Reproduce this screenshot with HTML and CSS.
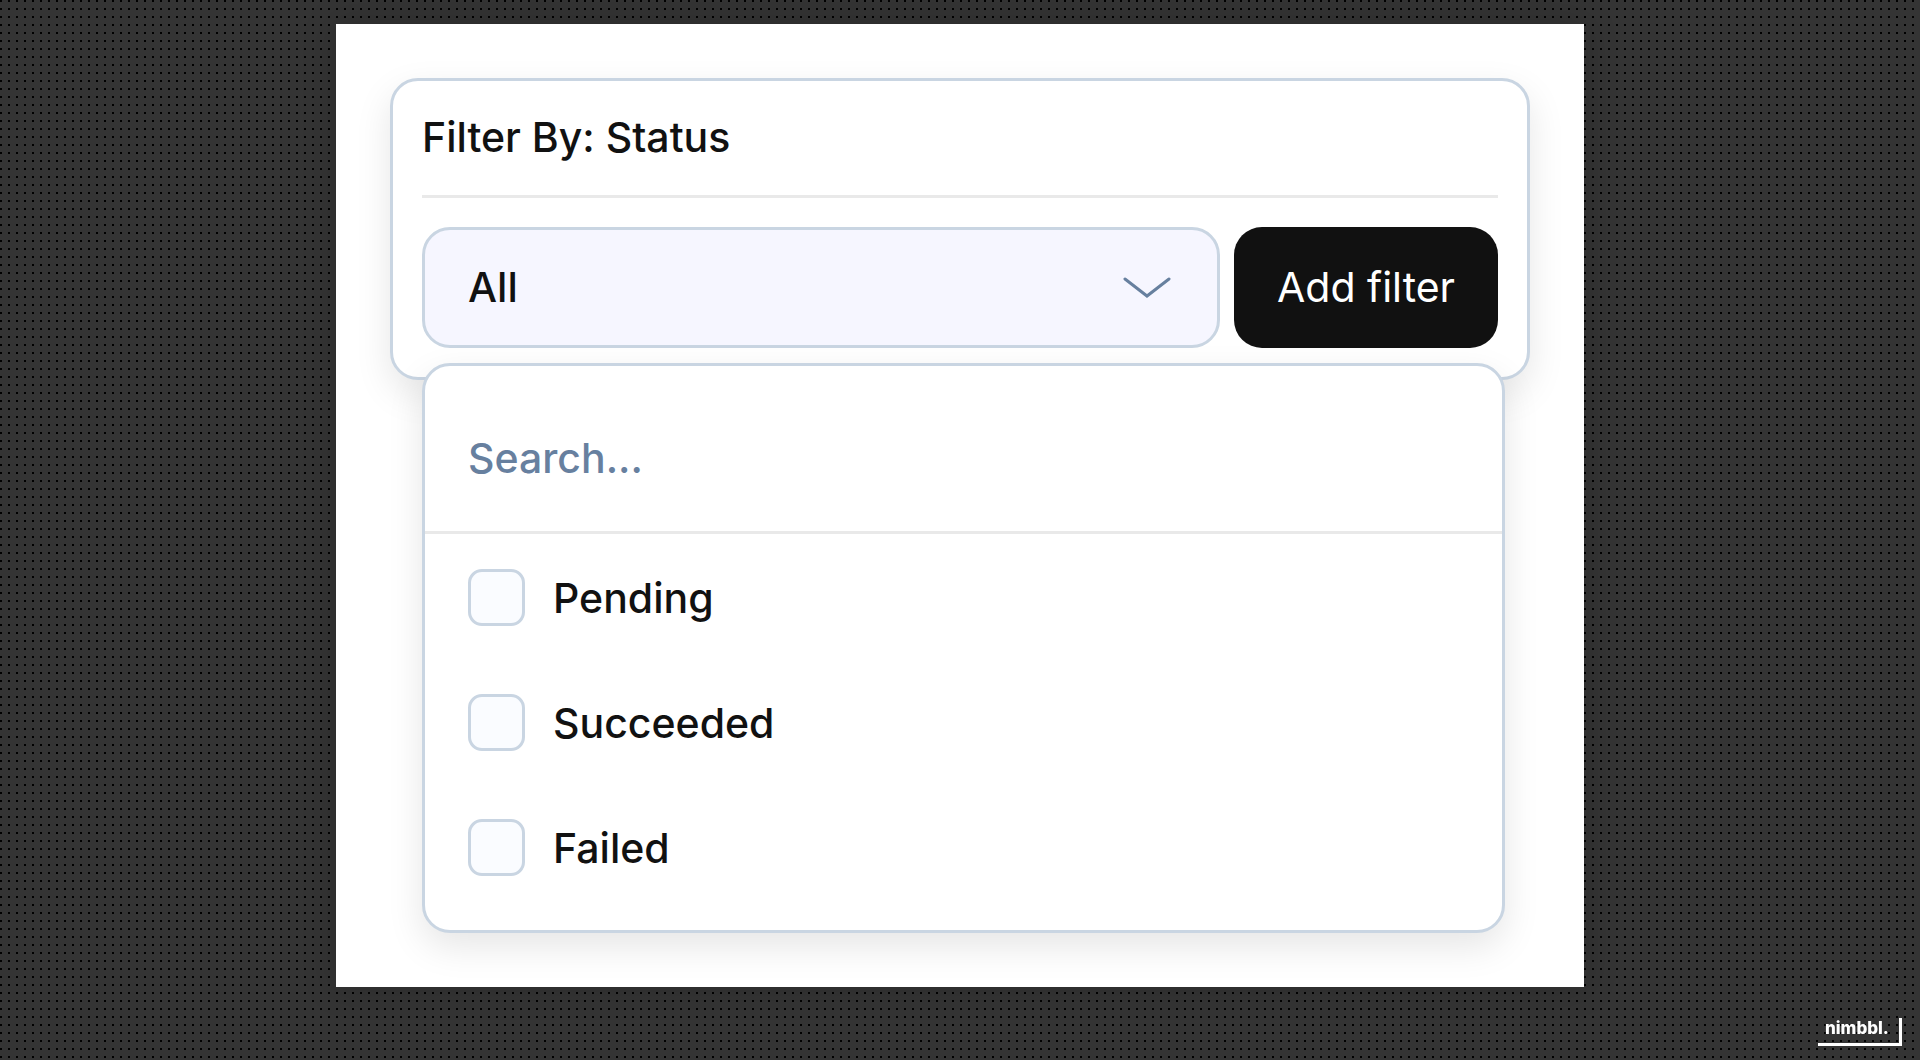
FILE: index.html
```html
<!DOCTYPE html>
<html lang="en">
<head>
  <meta charset="UTF-8">
  <meta name="viewport" content="width=device-width, initial-scale=1.0">
  <title>Filter by status</title>
  <link rel="stylesheet" href="styles.css">
</head>
<body>
  <main class="stage">
    <!-- Filter card -->
    <section class="filter-card">
      <h1>Filter By: Status</h1>
      <div class="filter-row">
        <div class="select-wrap">
          <select id="status" aria-label="Status">
            <option>All</option>
          </select>
          <svg class="chevron" viewBox="0 0 50 24" aria-hidden="true">
            <path d="M2 3 L24 20 L46 3" />
          </svg>
        </div>
        <button class="add-button" type="button">Add filter</button>
      </div>
    </section>

    <!-- Dropdown -->
    <section class="dropdown">
      <input class="search" type="text" placeholder="Search..." aria-label="Search">
      <div class="options">
        <label><input type="checkbox" name="status"> Pending</label>
        <label><input type="checkbox" name="status"> Succeeded</label>
        <label><input type="checkbox" name="status"> Failed</label>
      </div>
    </section>
  </main>

  <div class="brand">nimbbl.</div>
</body>
</html>
```

FILE: styles.css
```css
* {
  box-sizing: border-box;
}

body {
  margin: 0;
  padding: 24px 0;
  min-height: 100vh;
  background-color: #343434;
  background-image: conic-gradient(from 270deg at 2px 2px, #000 90deg, transparent 0);
  background-size: 8px 8px;
  color: #111;
  font-family: Inter, "Liberation Sans", sans-serif;
  font-size: 41px;
  font-weight: 500;
  line-height: 52px;
}

.stage {
  width: 65%;
  margin: 0 auto;
  padding: 54px;
  background-color: #fff;
  box-shadow: 0 0 32px rgba(0, 0, 0, 0.2);
}

/* Filter card */
.filter-card {
  padding: 30px 29px 29px;
  border: 3px solid #c9d5e2;
  border-radius: 28px;
  background-color: #fff;
  box-shadow: 0 14px 36px rgba(0, 0, 0, 0.1);
}

.filter-card h1 {
  margin: 0 0 29px;
  padding-bottom: 32px;
  border-bottom: 3px solid #e9e9e9;
  font-size: 41px;
  font-weight: 500;
}

.filter-row {
  display: flex;
  gap: 14px;
}

.select-wrap {
  position: relative;
  flex: 1;
}

select {
  width: 100%;
  height: 121px;
  padding: 0 43px 2px;
  border: 3px solid #c9d5e2;
  border-radius: 28px;
  background-color: #f6f6ff;
  color: #111;
  font: inherit;
  appearance: none;
}

.chevron {
  position: absolute;
  top: 49px;
  right: 47px;
  width: 50px;
  height: 24px;
  fill: none;
  stroke: #67809f;
  stroke-width: 3;
  stroke-linecap: round;
  pointer-events: none;
}

.add-button {
  width: 264px;
  height: 121px;
  padding: 0 0 2px;
  border: none;
  border-radius: 28px;
  background-color: #111;
  color: #fff;
  font: inherit;
  font-weight: 400;
}

/* Dropdown */
.dropdown {
  position: relative;
  margin: -17px 25px 0 32px;
  border: 3px solid #c9d5e2;
  border-radius: 28px;
  background-color: #fff;
  box-shadow: 0 14px 36px rgba(0, 0, 0, 0.1);
}

.search {
  display: block;
  width: 100%;
  height: 168px;
  padding: 18px 43px 0;
  border: none;
  border-bottom: 3px solid #e9e9e9;
  border-radius: 28px 28px 0 0;
  background-color: transparent;
  font: inherit;
}

.search::placeholder {
  color: #67809f;
  opacity: 1;
}

.options {
  display: flex;
  flex-direction: column;
  gap: 68px;
  padding: 35px 43px 54px;
}

.options label {
  display: flex;
  align-items: center;
  gap: 28px;
  height: 57px;
}

.options input {
  width: 57px;
  height: 57px;
  margin: 0;
  border: 3px solid #c9d5e2;
  border-radius: 14px;
  background-color: #fafcff;
  appearance: none;
}

/* Brand mark */
.brand {
  position: fixed;
  right: 18px;
  bottom: 14px;
  width: 84px;
  height: 28px;
  padding-left: 7px;
  border-right: 3px solid #fff;
  border-bottom: 3px solid #fff;
  color: #fff;
  font-family: Inter, sans-serif;
  font-size: 17px;
  font-weight: 800;
  line-height: 20px;
}
```
